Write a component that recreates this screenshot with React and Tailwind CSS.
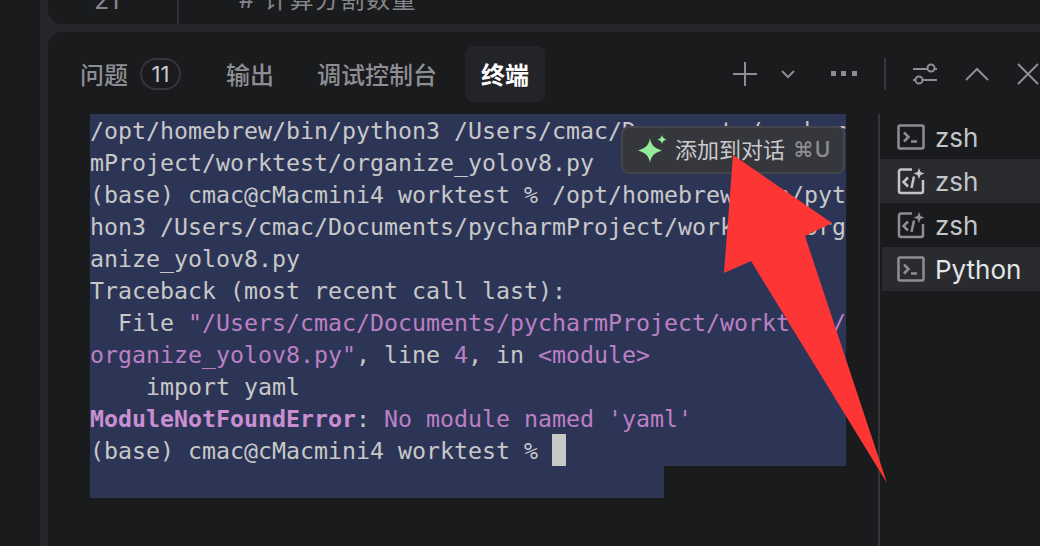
import React from 'react';

const sans = 'font-["Inter","Noto_Sans_CJK_SC",sans-serif]';

const TerminalIcon = () => (
  <svg width="28" height="26" viewBox="0 0 28 26" fill="none" stroke="currentColor" strokeWidth="2.5">
    <rect x="1.500" y="1.500" width="25" height="23" rx="1.500" />
    <path d="M7 8.500l4.500 4.500L7 17.500" />
    <path d="M14 17.500h6" />
  </svg>
);

const SparkCodeIcon = () => (
  <svg width="28" height="28" viewBox="0 0 28 28" fill="none" stroke="currentColor" strokeWidth="2.5">
    <path d="M15 2.500H4a2 2 0 0 0-2 2V24a2 2 0 0 0 2 2h20a2 2 0 0 0 2-2V13" />
    <path d="M11 10.500l-4.500 4.500 4.500 4.500" />
    <path d="M17 9.500l-2.500 11.500" />
    <path d="M22 1l1.500 4 4 1.500-4 1.500-1.500 4-1.500-4-4-1.500 4-1.500z" fill="currentColor" stroke="none" />
  </svg>
);

const SessionRow = ({ icon, label, className = '' }) => (
  <div className={`flex h-[44px] items-center pl-[17px] text-[26px] ${className}`}>
    <span className="flex w-[38px] shrink-0">{icon}</span>
    <span>{label}</span>
  </div>
);

const Line = ({ children }) => (
  <div className="h-[32px] w-[756px] bg-[#2d3557] whitespace-pre">{children}</div>
);

const P = ({ children, bold }) => (
  <span className={bold ? 'font-bold text-[#c98fd0]' : 'text-[#bb80c4]'}>{children}</span>
);

const Tab = ({ className = '', children }) => (
  <span className={`flex h-[56px] items-center pt-[4px] ${className}`}>{children}</span>
);

export default function App() {
  return (
    <div className={`relative flex h-[546px] w-[1040px] overflow-hidden bg-[#26272b] ${sans}`}>
      {/* activity bar */}
      <div className="w-[40px] shrink-0 bg-[#1a1b1d]" />

      <div className="flex min-w-0 flex-1 flex-col gap-[8px] pl-[8px]">
        {/* editor bottom edge */}
        <div className="flex h-[24px] shrink-0 items-end overflow-hidden rounded-bl-[14px] bg-[#1a1b1d]">
          <div className="mb-[12px] w-[129px] pl-[46px] text-[25px] leading-[24px] text-[#85868b]">21</div>
          <div className="h-[24px] w-[2px] bg-[#2e2f33]" />
          <div className="mb-[12px] pl-[60px] text-[24px] leading-[24px] tracking-[1.5px] text-[#85868b]">#  计算分割数量</div>
        </div>

        {/* panel */}
        <div className="flex min-h-0 flex-1 flex-col rounded-tl-[14px] bg-[#1a1b1d]">
          <div className="flex h-[82px] shrink-0 items-start pl-[32px] pt-[14px] text-[24px] font-medium text-[#8d8e93]">
            <Tab className="w-[48px]">问题</Tab>
            <span className="ml-[12px] mt-[12px] flex h-[32px] w-[41px] items-center justify-center rounded-full border-2 border-[#35363a] text-[22px] font-normal text-[#c9cacd]">11</span>
            <Tab className="ml-[45px] w-[48px]">输出</Tab>
            <Tab className="ml-[43px] w-[120px]">调试控制台</Tab>
            <Tab className="ml-[28px] w-[80px] justify-center rounded-[8px] bg-[#232428] font-bold text-white">终端</Tab>

            <div className="ml-auto mr-[1px] flex h-[56px] items-center text-[#8d8e93]">
              <svg width="26" height="26" viewBox="0 0 26 26" stroke="currentColor" strokeWidth="2" fill="none">
                <path d="M13 1v24M1 13h24" />
              </svg>
              <svg className="ml-[22px]" width="16" height="10" viewBox="0 0 16 10" stroke="currentColor" strokeWidth="2" fill="none">
                <path d="M2 2l6 6 6-6" />
              </svg>
              <svg className="ml-[34px]" width="28" height="6" viewBox="0 0 28 6" fill="currentColor">
                <rect x="1" y="0" width="5" height="5" />
                <rect x="11" y="0" width="5" height="5" />
                <rect x="22" y="0" width="5" height="5" />
              </svg>
              <div className="ml-[26px] h-[32px] w-[2px] bg-[#35363a]" />
              <svg className="ml-[26px]" width="26" height="26" viewBox="0 0 26 26" stroke="currentColor" strokeWidth="2" fill="none">
                <path d="M1 8h15M23 8h2M1 19h2M10 19h15" />
                <circle cx="19" cy="7" r="3.500" />
                <circle cx="7" cy="19" r="3.500" />
              </svg>
              <svg className="ml-[27px]" width="24" height="14" viewBox="0 0 24 14" stroke="currentColor" strokeWidth="2" fill="none">
                <path d="M1 13L12 2l11 11" />
              </svg>
              <svg className="ml-[28px]" width="22" height="22" viewBox="0 0 22 22" stroke="currentColor" strokeWidth="2" fill="none">
                <path d="M1 1l20 20M21 1L1 21" />
              </svg>
            </div>
          </div>

          <div className="flex min-h-0 flex-1">
            {/* terminal output */}
            <div className='w-[786px] shrink-0 pl-[42px] font-["DejaVu_Sans_Mono",monospace] text-[23.25px] leading-[34px] text-[#c8c8c8]'>
              <Line>/opt/homebrew/bin/python3 /Users/cmac/Documents/pychar</Line>
              <Line>mProject/worktest/organize_yolov8.py</Line>
              <Line>(base) cmac@cMacmini4 worktest % /opt/homebrew/bin/pyt</Line>
              <Line>hon3 /Users/cmac/Documents/pycharmProject/worktest/org</Line>
              <Line>anize_yolov8.py</Line>
              <Line>Traceback (most recent call last):</Line>
              <Line>  File <P>"/Users/cmac/Documents/pycharmProject/worktest/</P></Line>
              <Line><P>organize_yolov8.py"</P>, line <P>4</P>, in <P>&lt;module&gt;</P></Line>
              <Line>    import yaml</Line>
              <Line><P bold>ModuleNotFoundError</P>: <P>No module named 'yaml'</P></Line>
              <Line>
                (base) cmac@cMacmini4 worktest %{' '}
                <span className="inline-block h-[32px] w-[14px] bg-[#c8c8c8] align-top" />
              </Line>
              <div className="h-[32px] w-[574px] bg-[#2d3557]" />
            </div>

            <div className="ml-[44px] w-[2px] shrink-0 bg-[#35363a]" />

            {/* session list */}
            <div className="min-w-0 flex-1 pt-[1px] text-[#c4c5c9]">
              <SessionRow icon={<span className="text-[#8d8e93]"><TerminalIcon /></span>} label="zsh" />
              <SessionRow icon={<span className="text-[#c4c5c9]"><SparkCodeIcon /></span>} label="zsh" className="bg-[#2a2b2f]" />
              <SessionRow icon={<span className="text-[#8d8e93]"><SparkCodeIcon /></span>} label="zsh" />
              <SessionRow icon={<span className="text-[#8d8e93]"><TerminalIcon /></span>} label="Python" className="ml-[2px] bg-[#2a2b2f] !pl-[15px] text-[#e4e5e8]" />
            </div>
          </div>
        </div>
      </div>

      {/* add to chat tooltip */}
      <div className="absolute left-[621px] top-[126px] flex h-[48px] w-[224px] items-center rounded-[8px] border-2 border-[#45464b] bg-[#36373c] pl-[13px]">
        <svg width="32" height="32" viewBox="0 0 32 32" fill="#95ec98">
          <path d="M14 4c1 7 4 10 12 12.500-8 2.500-11 5.500-12 12.500-1-7-4-10-12-12.500 8-2.500 11-5.500 12-12.500z" />
          <path d="M26 1c.5 2.500 1.500 3.500 4.500 4.500-3 1-4 2-4.500 4.500-.5-2.500-1.500-3.500-4.500-4.500 3-1 4-2 4.500-4.500z" />
        </svg>
        <span className="ml-[7px] text-[22px] text-[#c9cacd]">添加到对话</span>
        <span className="ml-[8px] text-[21px] font-medium tracking-[1px] text-[#8d8e93]">⌘U</span>
      </div>

      {/* annotation arrow */}
      <svg className="pointer-events-none absolute left-0 top-0" width="1040" height="546" viewBox="0 0 1040 546">
        <polygon points="733,155 832,223 805,236 887,483 751,261 724,273" fill="#fd3535" />
      </svg>
    </div>
  );
}
